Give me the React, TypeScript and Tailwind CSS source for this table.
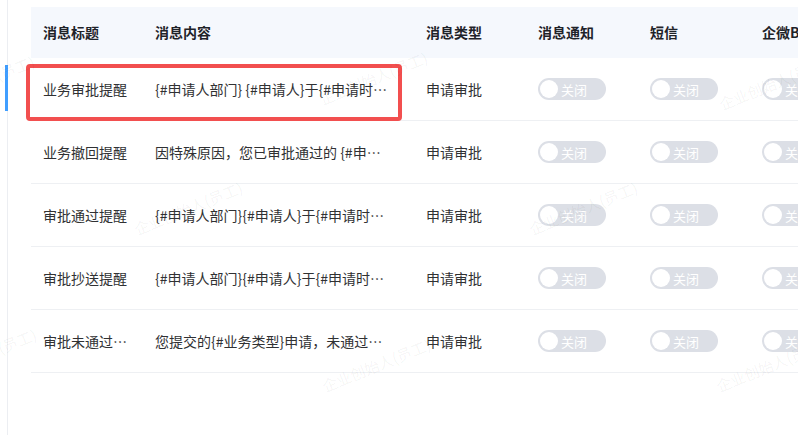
import React from "react";

const rows = [
  { title: "业务审批提醒", content: "{#申请人部门} {#申请人}于{#申请时间}提交了{#业务类型}申请", type: "申请审批" },
  { title: "业务撤回提醒", content: "因特殊原因，您已审批通过的 {#申请人}的申请已被撤回", type: "申请审批" },
  { title: "审批通过提醒", content: "{#申请人部门}{#申请人}于{#申请时间}提交的申请已通过", type: "申请审批" },
  { title: "审批抄送提醒", content: "{#申请人部门}{#申请人}于{#申请时间}提交的申请抄送给您", type: "申请审批" },
  { title: "审批未通过提醒", content: "您提交的{#业务类型}申请，未通过审批，请及时查看", type: "申请审批" },
];

const Toggle = () => (
  <div className="flex h-[22px] w-[68px] items-center rounded-full bg-[#dcdfe6] pl-[2px]">
    <div className="h-[18px] w-[18px] rounded-full bg-white" />
    <span className="ml-[3px] text-[13px] leading-none text-white">关闭</span>
  </div>
);

const marks = [
  { l: -73, t: 93 },
  { l: 320, t: 89 },
  { l: 720, t: 94 },
  { l: 135, t: 219 },
  { l: 530, t: 219 },
  { l: -71, t: 366 },
  { l: 323, t: 376 },
  { l: 717, t: 376 },
];

export default function App() {
  const font = { fontFamily: '"Noto Sans CJK SC", "Noto Sans", sans-serif' };
  return (
    <div className="relative flex h-[435px] w-[798px] overflow-hidden bg-white" style={font}>
      <div className="relative w-[8px] shrink-0 border-r border-[#eceef2]">
        <div className="absolute left-[5px] top-[65px] h-[46px] w-[3px] bg-[#409eff]" />
      </div>
      <div className="pl-[23px] pt-[7px]">
        <div className="flex h-[51px] w-[900px] items-center bg-[#f5f8fd] text-[14px] font-bold text-[#1f2329]">
          <div className="w-[112px] shrink-0 px-3">消息标题</div>
          <div className="w-[271px] shrink-0 px-3">消息内容</div>
          <div className="w-[112px] shrink-0 px-3">消息类型</div>
          <div className="w-[112px] shrink-0 px-3">消息通知</div>
          <div className="w-[112px] shrink-0 px-3">短信</div>
          <div className="w-[181px] shrink-0 px-3 whitespace-nowrap">企微BOT通知</div>
        </div>
        {rows.map((r, i) => (
          <div key={i} className="flex h-[63px] w-[900px] items-center border-b border-[#eef0f3] text-[14px] text-[#303133]">
            <div className="w-[112px] shrink-0 px-3">
              <div className="truncate">{r.title}</div>
            </div>
            <div className="w-[271px] shrink-0 pl-3 pr-[20px]">
              <div className="truncate">{r.content}</div>
            </div>
            <div className="w-[112px] shrink-0 px-3">{r.type}</div>
            <div className="w-[112px] shrink-0 px-3"><Toggle /></div>
            <div className="w-[112px] shrink-0 px-3"><Toggle /></div>
            <div className="w-[181px] shrink-0 px-3"><Toggle /></div>
          </div>
        ))}
      </div>
      <div className="pointer-events-none absolute left-[26px] top-[64px] h-[57px] w-[376px] rounded-[4px] border-[4px] border-[#f24f4f]" />
      {marks.map((m, i) => (
        <div
          key={i}
          className="pointer-events-none absolute origin-left -rotate-[22deg] whitespace-nowrap text-[15px] text-[rgba(0,0,0,0.05)]"
          style={{ left: m.l, top: m.t }}
        >
          企业创始人(员工)
        </div>
      ))}
    </div>
  );
}
